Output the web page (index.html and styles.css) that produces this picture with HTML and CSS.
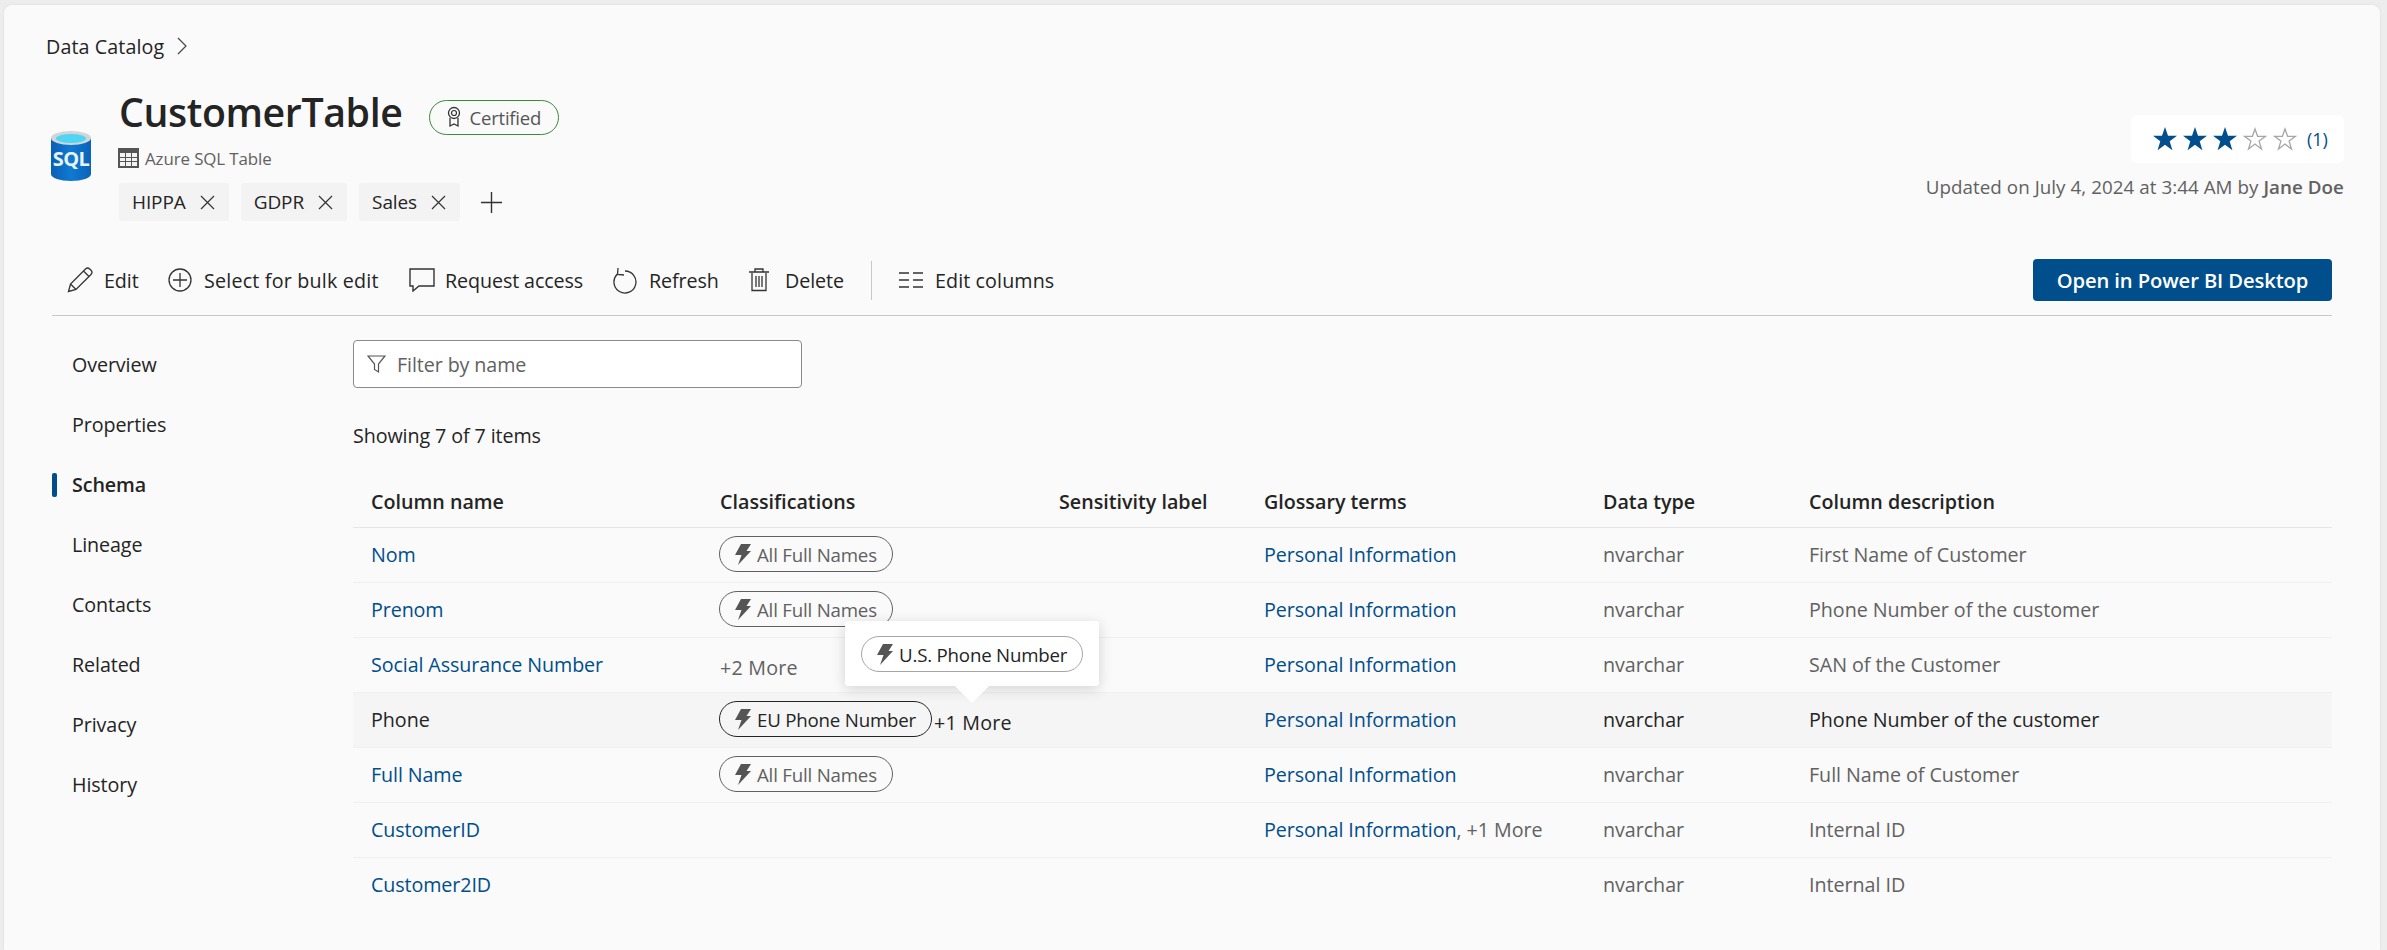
FILE: index.html
```html
<!DOCTYPE html>
<html lang="en">
<head>
<meta charset="utf-8">
<title>CustomerTable</title>
<link rel="stylesheet" href="styles.css">
</head>
<body>
<main class="card">
  <nav class="crumb"><span class="crumb-text">Data Catalog</span><svg class="crumb-chev" width="10" height="18" viewBox="0 0 10 18"><path d="M1 1l8 8-8 8" fill="none" stroke="#444" stroke-width="1.2"/></svg></nav>

  <header class="head">
    <svg class="sql" width="42" height="52" viewBox="0 0 42 52">
      <defs><linearGradient id="cyl" x1="0" x2="1" y1="0" y2="0"><stop offset="0" stop-color="#0a5fb4"/><stop offset=".5" stop-color="#0f7ad2"/><stop offset="1" stop-color="#0a62b8"/></linearGradient></defs>
      <path d="M1 8v36c0 4 9 7 20 7s20-3 20-7V8z" fill="url(#cyl)"/>
      <ellipse cx="21" cy="8" rx="20" ry="7" fill="#d3d6d9"/>
      <ellipse cx="21" cy="8.500" rx="15" ry="4.500" fill="#50d6f2"/>
      <text x="21" y="36" class="sql-text" text-anchor="middle">SQL</text>
    </svg>
    <div class="head-main">
      <div class="title-row">
        <h1 class="title">CustomerTable</h1>
        <span class="cert">
          <svg width="14" height="22" viewBox="0 0 14 22"><circle cx="7" cy="7" r="5.500" fill="none" stroke="#333" stroke-width="1.300"/><circle cx="7" cy="7" r="2.500" fill="none" stroke="#333" stroke-width="1.200"/><path d="M3 12v8l4-2 4 2v-8" fill="none" stroke="#333" stroke-width="1.300"/></svg>
          Certified
        </span>
      </div>
      <div class="subtype">
        <svg class="subtype-icon" width="21" height="20" viewBox="0 0 21 20"><path d="M0 0h21v20H0z" fill="#555"/><path d="M2 5h5v4H2zM8 5h5v4H8zM14 5h5v4h-5zM2 10h5v3H2zM8 10h5v3H8zM14 10h5v3h-5zM2 14h5v4H2zM8 14h5v4H8zM14 14h5v4h-5z" fill="#f4f4f4"/></svg>
        <span>Azure SQL Table</span>
      </div>
      <div class="tags">
        <span class="tag">HIPPA<svg class="x" width="15" height="15" viewBox="0 0 15 15"><path d="M1 1l13 13M14 1L1 14" stroke="#333" stroke-width="1.200"/></svg></span>
        <span class="tag">GDPR<svg class="x" width="15" height="15" viewBox="0 0 15 15"><path d="M1 1l13 13M14 1L1 14" stroke="#333" stroke-width="1.200"/></svg></span>
        <span class="tag">Sales<svg class="x" width="15" height="15" viewBox="0 0 15 15"><path d="M1 1l13 13M14 1L1 14" stroke="#333" stroke-width="1.200"/></svg></span>
        <svg class="plus" width="21" height="21" viewBox="0 0 21 21"><path d="M10.500 0v21M0 10.500h21" stroke="#333" stroke-width="1.400"/></svg>
      </div>
    </div>
    <div class="head-side">
      <div class="rating">
        <svg class="star" width="24" height="24" viewBox="0 0 24 24"><path class="on" d="M12 0l3 8.800h9l-7.300 5.500 2.700 9L12 17.800l-7.400 5.500 2.700-9L0 8.800h9z"/></svg>
        <svg class="star" width="24" height="24" viewBox="0 0 24 24"><path class="on" d="M12 0l3 8.800h9l-7.300 5.500 2.700 9L12 17.800l-7.400 5.500 2.700-9L0 8.800h9z"/></svg>
        <svg class="star" width="24" height="24" viewBox="0 0 24 24"><path class="on" d="M12 0l3 8.800h9l-7.300 5.500 2.700 9L12 17.800l-7.400 5.500 2.700-9L0 8.800h9z"/></svg>
        <svg class="star" width="24" height="24" viewBox="0 0 24 24"><path class="off" d="M12 2l2.600 7.300h7.900l-6.400 4.800 2.400 7.900-6.500-4.900-6.500 4.900 2.400-7.900-6.400-4.800h7.900z"/></svg>
        <svg class="star" width="24" height="24" viewBox="0 0 24 24"><path class="off" d="M12 2l2.600 7.300h7.900l-6.400 4.800 2.400 7.900-6.500-4.900-6.500 4.900 2.400-7.900-6.400-4.800h7.900z"/></svg>
        <span class="rating-count">(1)</span>
      </div>
      <p class="updated">Updated on July 4, 2024 at 3:44 AM by <b>Jane Doe</b></p>
    </div>
  </header>

  <div class="toolbar">
    <button class="tool t-edit">
      <svg width="26" height="26" viewBox="0 0 26 26"><path d="M1.500 24.500l2-7.500L18.500 2c1.300-1.200 3-1.200 4.200 0l1.300 1.300c1.200 1.200 1.200 2.900 0 4.200L9 22.500zM3.500 17L9 22.500M16.500 4l5.500 5.500" fill="none" stroke="#333" stroke-width="1.300"/></svg>
      Edit</button>
    <button class="tool t-bulk">
      <svg width="24" height="24" viewBox="0 0 24 24"><circle cx="12" cy="12" r="11" fill="none" stroke="#333" stroke-width="1.300"/><path d="M12 5v14M5 12h14" stroke="#333" stroke-width="1.300"/></svg>
      Select for bulk edit</button>
    <button class="tool t-req">
      <svg width="26" height="24" viewBox="0 0 26 24"><path d="M1 1h24v17H10l-6 5v-5H1z" fill="none" stroke="#333" stroke-width="1.400"/></svg>
      Request access</button>
    <button class="tool t-ref">
      <svg width="24" height="27" viewBox="0 0 24 27"><path d="M12 4a11 11 0 1 1-7.800 3.200" fill="none" stroke="#333" stroke-width="1.300"/><path d="M5 1l-.5 6.500 6.500.5" fill="none" stroke="#333" stroke-width="1.300"/></svg>
      Refresh</button>
    <button class="tool t-del">
      <svg width="20" height="24" viewBox="0 0 20 24"><path d="M3 5v17.500h14V5M0 4h20M6 4V1h8v3M7 8v11M10 8v11M13 8v11" fill="none" stroke="#333" stroke-width="1.300"/></svg>
      Delete</button>
    <span class="tool-sep"></span>
    <button class="tool t-cols">
      <svg width="24" height="18" viewBox="0 0 24 18"><path d="M0 2h10M14 2h10M0 9h10M14 9h10M0 16h10M14 16h10" stroke="#333" stroke-width="1.500"/></svg>
      Edit columns</button>
    <button class="primary">Open in Power BI Desktop</button>
  </div>

  <div class="body">
    <ul class="side">
      <li class="side-item">Overview</li>
      <li class="side-item">Properties</li>
      <li class="side-item active">Schema</li>
      <li class="side-item">Lineage</li>
      <li class="side-item">Contacts</li>
      <li class="side-item">Related</li>
      <li class="side-item">Privacy</li>
      <li class="side-item">History</li>
    </ul>
    <section class="content">
      <div class="filter">
        <svg width="19" height="19" viewBox="0 0 19 19"><path d="M1 1h17l-6.500 8v8l-4-2.500V9z" fill="none" stroke="#555" stroke-width="1.200"/></svg>
        <span>Filter by name</span>
      </div>
      <p class="count">Showing 7 of 7 items</p>

      <div class="table">
        <div class="row header">
          <div>Column name</div><div>Classifications</div><div>Sensitivity label</div><div>Glossary terms</div><div>Data type</div><div>Column description</div>
        </div>
        <div class="row">
          <div><a class="link">Nom</a></div>
          <div><span class="pill"><svg class="bolt" width="16" height="21" viewBox="0 0 16 21"><path d="M6 0h10l-4.500 7H16L3 21l3.500-10H0z"/></svg>All Full Names</span></div><div></div>
          <div><a class="link">Personal Information</a></div><div class="muted">nvarchar</div><div class="muted">First Name of Customer</div>
        </div>
        <div class="row">
          <div><a class="link">Prenom</a></div>
          <div><span class="pill"><svg class="bolt" width="16" height="21" viewBox="0 0 16 21"><path d="M6 0h10l-4.500 7H16L3 21l3.500-10H0z"/></svg>All Full Names</span></div><div></div>
          <div><a class="link">Personal Information</a></div><div class="muted">nvarchar</div><div class="muted">Phone Number of the customer</div>
        </div>
        <div class="row">
          <div><a class="link">Social Assurance Number</a></div>
          <div class="muted"><span class="more">+2 More</span></div><div></div>
          <div><a class="link">Personal Information</a></div><div class="muted">nvarchar</div><div class="muted">SAN of the Customer</div>
        </div>
        <div class="row hover">
          <div class="dark">Phone</div>
          <div class="cell-flex"><span class="pill dark-pill"><svg class="bolt" width="16" height="21" viewBox="0 0 16 21"><path d="M6 0h10l-4.500 7H16L3 21l3.500-10H0z"/></svg>EU Phone Number</span><span class="more more-side">+1 More</span></div><div></div>
          <div><a class="link">Personal Information</a></div><div class="dark">nvarchar</div><div class="dark">Phone Number of the customer</div>
        </div>
        <div class="row">
          <div><a class="link">Full Name</a></div>
          <div><span class="pill"><svg class="bolt" width="16" height="21" viewBox="0 0 16 21"><path d="M6 0h10l-4.500 7H16L3 21l3.500-10H0z"/></svg>All Full Names</span></div><div></div>
          <div><a class="link">Personal Information</a></div><div class="muted">nvarchar</div><div class="muted">Full Name of Customer</div>
        </div>
        <div class="row">
          <div><a class="link">CustomerID</a></div>
          <div></div><div></div>
          <div><a class="link">Personal Information</a><span class="muted">, +1 More</span></div><div class="muted">nvarchar</div><div class="muted">Internal ID</div>
        </div>
        <div class="row last">
          <div><a class="link">Customer2ID</a></div>
          <div></div><div></div><div></div><div class="muted">nvarchar</div><div class="muted">Internal ID</div>
        </div>

        <div class="tooltip">
          <span class="pill light-pill"><svg class="bolt" width="16" height="21" viewBox="0 0 16 21"><path d="M6 0h10l-4.500 7H16L3 21l3.500-10H0z"/></svg>U.S. Phone Number</span>
        </div>
      </div>
    </section>
  </div>
</main>
</body>
</html>
```

FILE: styles.css
```css
* { box-sizing: border-box; }
html, body { margin: 0; height: 100%; }
body {
  background: #ededed;
  font-family: "Open Sans", "Noto Sans", sans-serif;
  font-size: 19.7px;
  letter-spacing: -0.1px;
  color: #242424;
  overflow: hidden;
  padding: 5px 7px 0 4px;
}
.card {
  background: #fafafa;
  border-radius: 8px 8px 0 0;
  height: 945px;
  padding: 25px 48px 0;
  box-shadow: 0 0 3px rgba(0,0,0,.08);
}
.crumb { height: 32px; margin-left: -6px; display: flex; align-items: center; gap: 13px; }
.crumb-text { letter-spacing: 0.1px; }
.crumb-chev { flex: none; }

.head { display: flex; height: 150px; margin-top: 28px; }
.sql { margin: 40px 27px 0 -2px; flex: none; }
.sql-text { font: 700 20px "Open Sans", sans-serif; fill: #e8f4fc; letter-spacing: -0.5px; }
.head-main { flex: 1; }
.title-row { display: flex; align-items: center; height: 50px; gap: 27px; }
.title { margin: 0 0 6px; font-size: 39.300px; font-weight: 600; line-height: 50px; letter-spacing: -0.4px; color: #242424; }
.cert {
  display: inline-flex; align-items: center; gap: 8px;
  height: 35px; width: 130px; padding-left: 17px; margin-top: 4px;
  border: 1px solid #3a8a3a; border-radius: 18px;
  color: #555; font-size: 18.500px; letter-spacing: -0.2px;
}
.subtype { display: flex; align-items: center; gap: 6px; margin-top: 8px; height: 20px; font-size: 16.900px; color: #616161; letter-spacing: -0.1px; }
.subtype-icon { margin-left: -1px; }
.tags { display: flex; align-items: center; margin-top: 15px; gap: 12px; height: 38px; }
.tag {
  display: inline-flex; align-items: center; gap: 14px;
  height: 38px; padding: 0 14px 0 13px; background: #f3f3f3; border-radius: 3px;
  font-size: 19px; letter-spacing: -0.1px;
}
.x { flex: none; }
.plus { margin-left: 9px; }

.head-side { display: flex; flex-direction: column; align-items: flex-end; margin-right: -12px; padding-top: 25px; }
.rating {
  display: flex; align-items: center; gap: 6px;
  width: 213px; height: 48px; padding-left: 22px;
  background: #fff; border-radius: 6px;
}
.star { flex: none; }
.on { fill: #004e8c; }
.off { fill: none; stroke: #a6a6a6; stroke-width: 1.300; }
.rating-count { color: #004e8c; font-size: 18px; margin-left: 4px; }
.updated { margin: 9px 0 0; color: #616161; font-size: 18.800px; line-height: 30px; letter-spacing: 0.05px; white-space: nowrap; }
.updated b { font-weight: 600; }

.toolbar {
  display: flex; align-items: center;
  height: 76px; padding: 5px 0 0 15px;
  border-bottom: 1px solid #c8c8c8;
}
.tool {
  display: inline-flex; align-items: center; gap: 11px;
  background: none; border: 0; padding: 0;
  font: inherit; letter-spacing: inherit; color: #242424;
}
.tool svg { flex: none; }
.t-edit { width: 101px; }
.t-bulk { width: 241px; gap: 12px; letter-spacing: 0.2px; }
.t-req { width: 204px; gap: 10px; }
.t-ref { width: 136px; gap: 12px; }
.t-del { width: 122px; gap: 16px; }
.tool-sep { width: 1px; height: 39px; background: #c8c8c8; margin-right: 27px; }
.t-cols { gap: 12px; letter-spacing: 0.1px; }
.primary {
  margin-left: auto;
  width: 299px; height: 42px;
  background: #004e8c; color: #fff; border: 0; border-radius: 4px;
  font: 600 20.200px "Open Sans", sans-serif; letter-spacing: -0.1px;
}

.body { display: flex; }
.side { list-style: none; margin: 0; padding: 19px 0 0; width: 301px; flex: none; }
.side-item { height: 60px; line-height: 60px; padding-left: 20px; position: relative; }
.side-item.active { font-weight: 600; }
.side-item.active::before {
  content: ""; position: absolute; left: 0; top: 18px; width: 5px; height: 24px;
  background: #004e8c; border-radius: 2px;
}
.content { flex: 1; padding-top: 24px; }
.filter {
  display: flex; align-items: center; gap: 11px;
  width: 449px; height: 48px; padding-left: 13px;
  background: #fff; border: 1px solid #8a8a8a; border-radius: 4px;
  color: #616161;
}
.count { margin: 33px 0 0; line-height: 30px; }

.table { position: relative; margin-top: 25px; }
.row {
  display: grid;
  grid-template-columns: 367px 339px 205px 339px 206px 1fr;
  align-items: center;
  height: 55px;
  padding-bottom: 2px;
  border-bottom: 1px solid #f0f0f0;
  white-space: nowrap;
}
.row > :first-child { padding-left: 18px; }
.header { height: 52px; padding-bottom: 0; font-weight: 600; letter-spacing: 0px; border-bottom-color: #e6e6e6; }
.last { border-bottom: 0; }
.hover { background: #f5f5f5; }
.link { color: #004e8c; }
.muted { color: #616161; letter-spacing: -0.04px; }
.dark { color: #242424; letter-spacing: -0.04px; }
.cell-flex { display: flex; align-items: center; }
.more { display: inline-block; margin-top: 6px; letter-spacing: 0.2px; }
.more-side { margin-left: 2px; }
.pill {
  display: inline-flex; align-items: center; gap: 6px;
  height: 36px; padding: 0 15px;
  border: 1px solid #616161; border-radius: 18px;
  background: transparent; color: #616161;
  font-size: 18.700px; letter-spacing: -0.2px;
  margin-left: -1px;
  white-space: nowrap;
}
.bolt { fill: #555; flex: none; }
.dark-pill { border-color: #242424; color: #242424; }
.light-pill { border-color: #a6a6a6; color: #242424; margin: 0; }
.tooltip {
  position: absolute; left: 492px; top: 145px;
  width: 254px; height: 65px; padding: 15px 16px;
  background: #fff; border-radius: 3px;
  box-shadow: 0 3px 14px rgba(0,0,0,.16);
}
.tooltip::after {
  content: ""; position: absolute; left: 110px; top: 65px;
  border-left: 17px solid transparent; border-right: 17px solid transparent; border-top: 17px solid #fff;
}
```
